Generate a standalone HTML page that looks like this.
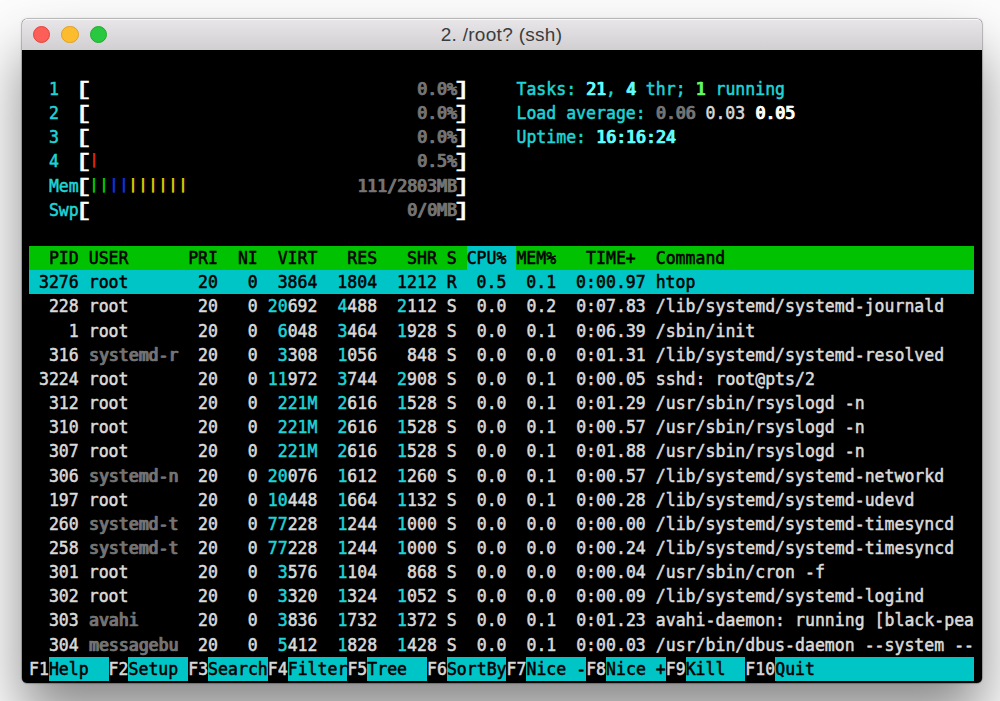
<!DOCTYPE html>
<html lang="en"><head><meta charset="utf-8"><title>2. /root? (ssh)</title>
<style>
html,body{margin:0;padding:0}
body{width:1000px;height:701px;overflow:hidden;position:relative;background:#fbfbfb;}
#desk{position:absolute;left:0;top:0;width:1000px;height:701px;background:#fcfcfc;}
#win{position:absolute;left:21.5px;top:18.5px;width:960px;height:664.9px;border-radius:5px;background:#000;
 box-shadow:0 0 0 0.5px rgba(0,0,0,.36),0 34px 56px rgba(0,0,0,.45),0 0 3px rgba(0,0,0,.18);}
#tb{position:absolute;left:0;top:0;width:960px;height:31.5px;border-radius:5px 5px 0 0;
 background:linear-gradient(180deg,#e8e6e8 0%,#d1cfd1 100%);box-shadow:inset 0 1px 0 rgba(255,255,255,.7);}
#title{position:absolute;left:0;top:0;width:960px;height:31.5px;line-height:32px;text-align:center;
 font-family:"Liberation Sans","DejaVu Sans",sans-serif;font-size:19px;letter-spacing:0.3px;color:#3c3c3c;}
.tl{position:absolute;top:7.0px;width:17.3px;height:17.3px;border-radius:50%;box-sizing:border-box;}
#term{position:absolute;left:0;top:0;width:1000px;height:701px;}
.row{position:absolute;left:29.00px;height:24.16px;line-height:24.16px;white-space:pre;
 font-family:"DejaVu Sans Mono", "Liberation Mono", monospace;font-size:16.50px;letter-spacing:0.0132px;color:#dadada;font-variant-ligatures:none;transform:scaleY(1.120);transform-origin:0 0;-webkit-text-stroke-width:0.50px;margin-top:-0.80px}
.b{text-shadow:1px 0 0 currentColor;-webkit-text-stroke-width:0.65px}
.br{display:inline-block;width:9.947px;letter-spacing:0;font-family:"Liberation Mono","DejaVu Sans Mono",monospace;transform-origin:4.62px 16.5px;transform:translate(-0.45px,0px) rotate(0.03deg) scale(1.70,1.041)}
.br.r{transform-origin:4.08px 16.5px;transform:translate(-1.0px,0px) rotate(0.03deg) scale(1.70,1.041)}
.bar{display:inline-block;width:9.947px;letter-spacing:0;transform-origin:5px 17.8px;transform:translateY(-2.8px) rotate(0.03deg) scaleY(0.76)}
.bg{position:absolute;display:block}
</style></head>
<body>
<div id="desk"></div>
<div id="win">
 <div id="tb"></div>
 <div class="tl" style="left:11.3px;background:#fc5f57;border:0.5px solid #e0443e"></div>
 <div class="tl" style="left:39.8px;background:#fdbc2e;border:0.5px solid #dea123"></div>
 <div class="tl" style="left:68.3px;background:#28c840;border:0.5px solid #1dad2b"></div>
 <div id="title">2. /root? (ssh)</div>
</div>
<div id="term">






<i class="bg" style="left:29.00px;top:245.88px;width:437.67px;height:24.16px;background:#00c200"></i><i class="bg" style="left:466.67px;top:245.88px;width:49.73px;height:24.16px;background:#00c5c7"></i><i class="bg" style="left:516.40px;top:245.88px;width:457.56px;height:24.16px;background:#00c200"></i>
<i class="bg" style="left:29.00px;top:270.04px;width:944.96px;height:24.16px;background:#00c5c7"></i>















<i class="bg" style="left:48.89px;top:656.60px;width:59.68px;height:24.16px;background:#00c5c7"></i><i class="bg" style="left:128.47px;top:656.60px;width:59.68px;height:24.16px;background:#00c5c7"></i><i class="bg" style="left:208.05px;top:656.60px;width:59.68px;height:24.16px;background:#00c5c7"></i><i class="bg" style="left:287.62px;top:656.60px;width:59.68px;height:24.16px;background:#00c5c7"></i><i class="bg" style="left:367.20px;top:656.60px;width:59.68px;height:24.16px;background:#00c5c7"></i><i class="bg" style="left:446.77px;top:656.60px;width:59.68px;height:24.16px;background:#00c5c7"></i><i class="bg" style="left:526.35px;top:656.60px;width:59.68px;height:24.16px;background:#00c5c7"></i><i class="bg" style="left:605.93px;top:656.60px;width:59.68px;height:24.16px;background:#00c5c7"></i><i class="bg" style="left:685.50px;top:656.60px;width:59.68px;height:24.16px;background:#00c5c7"></i><i class="bg" style="left:775.02px;top:656.60px;width:198.94px;height:24.16px;background:#00c5c7"></i>

<div class="row" style="top:76.76px">  <span style="color:#1fd4d6">1  </span><span class="br" style="color:#ffffff">[</span>                                 <span class="b" style="color:#747474">0.0%</span><span class="br r" style="color:#ffffff">]</span>     <span style="color:#1fd4d6">Tasks: </span><span class="b" style="color:#60fdff">21</span><span style="color:#1fd4d6">, </span><span class="b" style="color:#60fdff">4</span><span style="color:#1fd4d6"> thr; </span><span class="b" style="color:#5ffa68">1</span><span style="color:#1fd4d6"> running</span></div>
<div class="row" style="top:100.92px">  <span style="color:#1fd4d6">2  </span><span class="br" style="color:#ffffff">[</span>                                 <span class="b" style="color:#747474">0.0%</span><span class="br r" style="color:#ffffff">]</span>     <span style="color:#1fd4d6">Load average: </span><span class="b" style="color:#747474">0.06</span> <span style="color:#dadada">0.03</span> <span class="b" style="color:#ffffff">0.05</span></div>
<div class="row" style="top:125.08px">  <span style="color:#1fd4d6">3  </span><span class="br" style="color:#ffffff">[</span>                                 <span class="b" style="color:#747474">0.0%</span><span class="br r" style="color:#ffffff">]</span>     <span style="color:#1fd4d6">Uptime: </span><span class="b" style="color:#60fdff">16:16:24</span></div>
<div class="row" style="top:149.24px">  <span style="color:#1fd4d6">4  </span><span class="br" style="color:#ffffff">[</span><span class="bar" style="color:#e62a08">|</span>                                <span class="b" style="color:#747474">0.5%</span><span class="br r" style="color:#ffffff">]</span></div>
<div class="row" style="top:173.40px">  <span style="color:#1fd4d6">Mem</span><span class="br" style="color:#ffffff">[</span><span class="bar" style="color:#00da00">|</span><span class="bar" style="color:#00da00">|</span><span class="bar" style="color:#0a3ce8">|</span><span class="bar" style="color:#0a3ce8">|</span><span class="bar" style="color:#e4da00">|</span><span class="bar" style="color:#e4da00">|</span><span class="bar" style="color:#e4da00">|</span><span class="bar" style="color:#e4da00">|</span><span class="bar" style="color:#e4da00">|</span><span class="bar" style="color:#e4da00">|</span>                 <span class="b" style="color:#747474">111/2803MB</span><span class="br r" style="color:#ffffff">]</span></div>
<div class="row" style="top:197.56px">  <span style="color:#1fd4d6">Swp</span><span class="br" style="color:#ffffff">[</span>                                <span class="b" style="color:#747474">0/0MB</span><span class="br r" style="color:#ffffff">]</span></div>
<div class="row" style="top:245.88px"><span style="color:#000000">  PID USER      PRI  NI  VIRT   RES   SHR S </span><span style="color:#000000">CPU% </span><span style="color:#000000">MEM%   TIME+  Command                         </span></div>
<div class="row" style="top:270.04px"><span style="color:#000000"> 3276 root       20   0  3864  1804  1212 R  0.5  0.1  0:00.97 htop                            </span></div>
<div class="row" style="top:294.20px"><span style="color:#dadada">  228 </span><span style="color:#dadada">root      </span><span style="color:#dadada"> 20   0 </span><span style="color:#1fd4d6">20</span><span style="color:#dadada">692</span>  <span style="color:#1fd4d6">4</span><span style="color:#dadada">488</span>  <span style="color:#1fd4d6">2</span><span style="color:#dadada">112</span> <span style="color:#dadada">S  0.0  0.2  0:07.83 /lib/systemd/systemd-journald</span></div>
<div class="row" style="top:318.36px"><span style="color:#dadada">    1 </span><span style="color:#dadada">root      </span><span style="color:#dadada"> 20   0 </span> <span style="color:#1fd4d6">6</span><span style="color:#dadada">048</span>  <span style="color:#1fd4d6">3</span><span style="color:#dadada">464</span>  <span style="color:#1fd4d6">1</span><span style="color:#dadada">928</span> <span style="color:#dadada">S  0.0  0.1  0:06.39 /sbin/init</span></div>
<div class="row" style="top:342.52px"><span style="color:#dadada">  316 </span><span class="b" style="color:#747474">systemd-r </span><span style="color:#dadada"> 20   0 </span> <span style="color:#1fd4d6">3</span><span style="color:#dadada">308</span>  <span style="color:#1fd4d6">1</span><span style="color:#dadada">056</span> <span style="color:#dadada">  848</span> <span style="color:#dadada">S  0.0  0.0  0:01.31 /lib/systemd/systemd-resolved</span></div>
<div class="row" style="top:366.68px"><span style="color:#dadada"> 3224 </span><span style="color:#dadada">root      </span><span style="color:#dadada"> 20   0 </span><span style="color:#1fd4d6">11</span><span style="color:#dadada">972</span>  <span style="color:#1fd4d6">3</span><span style="color:#dadada">744</span>  <span style="color:#1fd4d6">2</span><span style="color:#dadada">908</span> <span style="color:#dadada">S  0.0  0.1  0:00.05 sshd: root@pts/2</span></div>
<div class="row" style="top:390.84px"><span style="color:#dadada">  312 </span><span style="color:#dadada">root      </span><span style="color:#dadada"> 20   0 </span><span style="color:#1fd4d6"> 221M</span>  <span style="color:#1fd4d6">2</span><span style="color:#dadada">616</span>  <span style="color:#1fd4d6">1</span><span style="color:#dadada">528</span> <span style="color:#dadada">S  0.0  0.1  0:01.29 /usr/sbin/rsyslogd -n</span></div>
<div class="row" style="top:415.00px"><span style="color:#dadada">  310 </span><span style="color:#dadada">root      </span><span style="color:#dadada"> 20   0 </span><span style="color:#1fd4d6"> 221M</span>  <span style="color:#1fd4d6">2</span><span style="color:#dadada">616</span>  <span style="color:#1fd4d6">1</span><span style="color:#dadada">528</span> <span style="color:#dadada">S  0.0  0.1  0:00.57 /usr/sbin/rsyslogd -n</span></div>
<div class="row" style="top:439.16px"><span style="color:#dadada">  307 </span><span style="color:#dadada">root      </span><span style="color:#dadada"> 20   0 </span><span style="color:#1fd4d6"> 221M</span>  <span style="color:#1fd4d6">2</span><span style="color:#dadada">616</span>  <span style="color:#1fd4d6">1</span><span style="color:#dadada">528</span> <span style="color:#dadada">S  0.0  0.1  0:01.88 /usr/sbin/rsyslogd -n</span></div>
<div class="row" style="top:463.32px"><span style="color:#dadada">  306 </span><span class="b" style="color:#747474">systemd-n </span><span style="color:#dadada"> 20   0 </span><span style="color:#1fd4d6">20</span><span style="color:#dadada">076</span>  <span style="color:#1fd4d6">1</span><span style="color:#dadada">612</span>  <span style="color:#1fd4d6">1</span><span style="color:#dadada">260</span> <span style="color:#dadada">S  0.0  0.1  0:00.57 /lib/systemd/systemd-networkd</span></div>
<div class="row" style="top:487.48px"><span style="color:#dadada">  197 </span><span style="color:#dadada">root      </span><span style="color:#dadada"> 20   0 </span><span style="color:#1fd4d6">10</span><span style="color:#dadada">448</span>  <span style="color:#1fd4d6">1</span><span style="color:#dadada">664</span>  <span style="color:#1fd4d6">1</span><span style="color:#dadada">132</span> <span style="color:#dadada">S  0.0  0.1  0:00.28 /lib/systemd/systemd-udevd</span></div>
<div class="row" style="top:511.64px"><span style="color:#dadada">  260 </span><span class="b" style="color:#747474">systemd-t </span><span style="color:#dadada"> 20   0 </span><span style="color:#1fd4d6">77</span><span style="color:#dadada">228</span>  <span style="color:#1fd4d6">1</span><span style="color:#dadada">244</span>  <span style="color:#1fd4d6">1</span><span style="color:#dadada">000</span> <span style="color:#dadada">S  0.0  0.0  0:00.00 /lib/systemd/systemd-timesyncd</span></div>
<div class="row" style="top:535.80px"><span style="color:#dadada">  258 </span><span class="b" style="color:#747474">systemd-t </span><span style="color:#dadada"> 20   0 </span><span style="color:#1fd4d6">77</span><span style="color:#dadada">228</span>  <span style="color:#1fd4d6">1</span><span style="color:#dadada">244</span>  <span style="color:#1fd4d6">1</span><span style="color:#dadada">000</span> <span style="color:#dadada">S  0.0  0.0  0:00.24 /lib/systemd/systemd-timesyncd</span></div>
<div class="row" style="top:559.96px"><span style="color:#dadada">  301 </span><span style="color:#dadada">root      </span><span style="color:#dadada"> 20   0 </span> <span style="color:#1fd4d6">3</span><span style="color:#dadada">576</span>  <span style="color:#1fd4d6">1</span><span style="color:#dadada">104</span> <span style="color:#dadada">  868</span> <span style="color:#dadada">S  0.0  0.0  0:00.04 /usr/sbin/cron -f</span></div>
<div class="row" style="top:584.12px"><span style="color:#dadada">  302 </span><span style="color:#dadada">root      </span><span style="color:#dadada"> 20   0 </span> <span style="color:#1fd4d6">3</span><span style="color:#dadada">320</span>  <span style="color:#1fd4d6">1</span><span style="color:#dadada">324</span>  <span style="color:#1fd4d6">1</span><span style="color:#dadada">052</span> <span style="color:#dadada">S  0.0  0.0  0:00.09 /lib/systemd/systemd-logind</span></div>
<div class="row" style="top:608.28px"><span style="color:#dadada">  303 </span><span class="b" style="color:#747474">avahi     </span><span style="color:#dadada"> 20   0 </span> <span style="color:#1fd4d6">3</span><span style="color:#dadada">836</span>  <span style="color:#1fd4d6">1</span><span style="color:#dadada">732</span>  <span style="color:#1fd4d6">1</span><span style="color:#dadada">372</span> <span style="color:#dadada">S  0.0  0.1  0:01.23 avahi-daemon: running [black-pea</span></div>
<div class="row" style="top:632.44px"><span style="color:#dadada">  304 </span><span class="b" style="color:#747474">messagebu </span><span style="color:#dadada"> 20   0 </span> <span style="color:#1fd4d6">5</span><span style="color:#dadada">412</span>  <span style="color:#1fd4d6">1</span><span style="color:#dadada">828</span>  <span style="color:#1fd4d6">1</span><span style="color:#dadada">428</span> <span style="color:#dadada">S  0.0  0.1  0:00.03 /usr/bin/dbus-daemon --system --</span></div>
<div class="row" style="top:656.60px"><span style="color:#d8d8d8">F1</span><span style="color:#000000">Help  </span><span style="color:#d8d8d8">F2</span><span style="color:#000000">Setup </span><span style="color:#d8d8d8">F3</span><span style="color:#000000">Search</span><span style="color:#d8d8d8">F4</span><span style="color:#000000">Filter</span><span style="color:#d8d8d8">F5</span><span style="color:#000000">Tree  </span><span style="color:#d8d8d8">F6</span><span style="color:#000000">SortBy</span><span style="color:#d8d8d8">F7</span><span style="color:#000000">Nice -</span><span style="color:#d8d8d8">F8</span><span style="color:#000000">Nice +</span><span style="color:#d8d8d8">F9</span><span style="color:#000000">Kill  </span><span style="color:#d8d8d8">F10</span><span style="color:#000000">Quit                </span></div>

</div>
</body></html>
